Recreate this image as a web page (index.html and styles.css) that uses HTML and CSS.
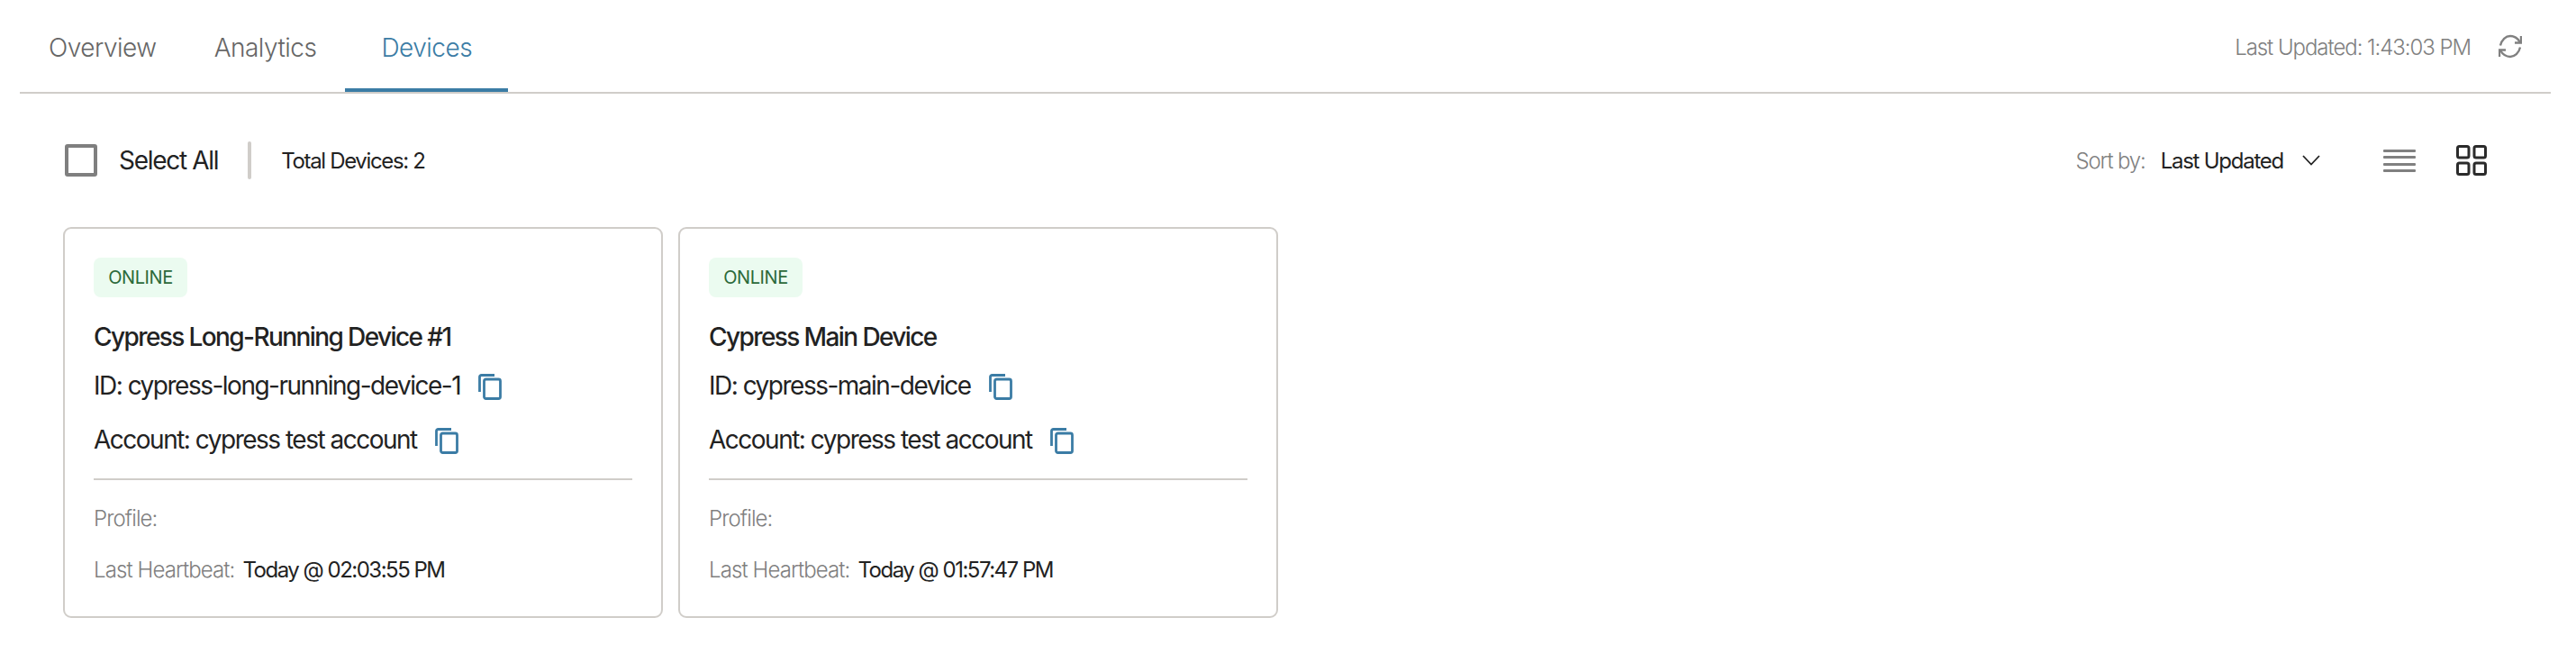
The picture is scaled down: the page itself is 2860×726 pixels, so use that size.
FILE: index.html
```html
<!DOCTYPE html>
<html lang="en">
<head>
<meta charset="utf-8">
<title>Devices</title>
<link rel="stylesheet" href="styles.css">
</head>
<body>
<div class="page">
  <header class="tabbar">
    <nav class="tabs">
      <a class="tab">Overview</a>
      <a class="tab">Analytics</a>
      <a class="tab active">Devices</a>
    </nav>
    <div class="updated">
      <span>Last Updated: 1:43:03 PM</span>
      <svg class="refresh" viewBox="0 0 26 27" fill="none" stroke="#808080" stroke-width="2.400">
        <path d="M2 12.500C3.500 6 8 2 13 2c4.600 0 8.400 2.600 11 7"/>
        <path d="M25 2v7.500h-7"/>
        <path d="M24 14.500C22.500 21 18 25 13 25c-4.600 0-8.400-2.600-11-7"/>
        <path d="M1 25v-7.500h7"/>
      </svg>
    </div>
  </header>

  <section class="toolbar">
    <div class="selection">
      <span class="checkbox"></span>
      <span class="select-all">Select All</span>
      <span class="vrule"></span>
      <span class="total">Total Devices: 2</span>
    </div>
    <div class="controls">
      <span class="muted">Sort by:</span>
      <span class="sort-value">Last Updated</span>
      <svg class="chevron" viewBox="0 0 20 12" fill="none" stroke="#222" stroke-width="1.800"><path d="M1 1l9 9.500L19 1"/></svg>
      <svg class="list-icon" viewBox="0 0 36 25" fill="#808080"><rect width="36" height="3" rx="1"/><rect y="7" width="36" height="3" rx="1"/><rect y="15" width="36" height="3" rx="1"/><rect y="22" width="36" height="3" rx="1"/></svg>
      <svg class="grid-icon" viewBox="0 0 34 34" fill="none" stroke="#2b2b2b" stroke-width="3">
        <rect x="1.500" y="1.500" width="12.500" height="12.500" rx="2"/>
        <rect x="20" y="1.500" width="12.500" height="12.500" rx="2"/>
        <rect x="1.500" y="20" width="12.500" height="12.500" rx="2"/>
        <rect x="20" y="20" width="12.500" height="12.500" rx="2"/>
      </svg>
    </div>
  </section>

  <main class="cards">
    <article class="card">
      <span class="badge">ONLINE</span>
      <h2 class="title">Cypress Long-Running Device #1</h2>
      <div class="row">
        <span class="row-text">ID: cypress-long-running-device-1</span>
        <svg class="copy" viewBox="0 0 26 30" fill="none" stroke="#3b7ca5" stroke-width="2.800"><path d="M1.500 21V4.500a2 2 0 0 1 2-2H18"/><rect x="6.500" y="7" width="18" height="21.500" rx="2"/></svg>
      </div>
      <div class="row">
        <span class="row-text">Account: cypress test account</span>
        <svg class="copy" viewBox="0 0 26 30" fill="none" stroke="#3b7ca5" stroke-width="2.800"><path d="M1.500 21V4.500a2 2 0 0 1 2-2H18"/><rect x="6.500" y="7" width="18" height="21.500" rx="2"/></svg>
      </div>
      <hr class="rule">
      <div class="meta"><span class="muted">Profile:</span></div>
      <div class="meta"><span class="muted">Last Heartbeat:</span><span class="value">Today @ 02:03:55 PM</span></div>
    </article>

    <article class="card">
      <span class="badge">ONLINE</span>
      <h2 class="title">Cypress Main Device</h2>
      <div class="row">
        <span class="row-text">ID: cypress-main-device</span>
        <svg class="copy" viewBox="0 0 26 30" fill="none" stroke="#3b7ca5" stroke-width="2.800"><path d="M1.500 21V4.500a2 2 0 0 1 2-2H18"/><rect x="6.500" y="7" width="18" height="21.500" rx="2"/></svg>
      </div>
      <div class="row">
        <span class="row-text">Account: cypress test account</span>
        <svg class="copy" viewBox="0 0 26 30" fill="none" stroke="#3b7ca5" stroke-width="2.800"><path d="M1.500 21V4.500a2 2 0 0 1 2-2H18"/><rect x="6.500" y="7" width="18" height="21.500" rx="2"/></svg>
      </div>
      <hr class="rule">
      <div class="meta"><span class="muted">Profile:</span></div>
      <div class="meta"><span class="muted">Last Heartbeat:</span><span class="value">Today @ 01:57:47 PM</span></div>
    </article>
  </main>
</div>
</body>
</html>
```

FILE: styles.css
```css
* { box-sizing: border-box; }

html, body {
  margin: 0;
  background: #fff;
}

body {
  font-family: Inter, "Liberation Sans", sans-serif;
  color: #222;
}

.page {
  padding: 0 28px 0 22px;
}

.tabbar {
  display: flex;
  justify-content: space-between;
  height: 104px;
  border-bottom: 2px solid #d0cdc9;
}

.tabs {
  display: flex;
}

.tab {
  height: 102px;
  padding: 36px 32px 0;
  font-size: 28px;
  font-weight: 300;
  line-height: 34px;
  letter-spacing: -0.5px;
  color: #666;
}

.tab.active {
  padding: 36px 40px 0;
  color: #3b7ca5;
  border-bottom: 4px solid #3b7ca5;
}

.updated {
  display: flex;
  align-items: center;
  gap: 31px;
  height: 102px;
  padding: 2px 32px 0 0;
  font-size: 24px;
  font-weight: 300;
  letter-spacing: -1.05px;
  color: #808080;
}

.refresh {
  width: 26px;
  height: 27px;
  margin-top: -2px;
}

.toolbar {
  display: flex;
  justify-content: space-between;
  align-items: center;
  height: 42px;
  margin: 53px 0;
  padding: 0 71px 0 50px;
}

.selection,
.controls {
  display: flex;
  align-items: center;
}

.checkbox {
  width: 36px;
  height: 36px;
  border: 4px solid #7f7f7f;
  border-radius: 3px;
}

.select-all {
  margin-left: 24px;
  font-size: 28px;
  letter-spacing: -1.3px;
}

.vrule {
  width: 4px;
  height: 42px;
  margin: 0 33px;
  border-radius: 2px;
  background: #d0cdc9;
}

.total {
  font-size: 24px;
  letter-spacing: -1.35px;
}

.muted {
  font-size: 24px;
  font-weight: 300;
  letter-spacing: -1.15px;
  color: #808080;
}

.sort-value {
  margin-left: 17px;
  font-size: 24px;
  letter-spacing: -1.25px;
}

.chevron {
  width: 20px;
  height: 12px;
  margin-left: 21px;
}

.list-icon {
  width: 36px;
  height: 25px;
  margin-left: 70px;
}

.grid-icon {
  width: 34px;
  height: 34px;
  margin-left: 45px;
}

.cards {
  display: flex;
  gap: 17px;
  padding-left: 48px;
}

.card {
  display: flex;
  flex-direction: column;
  align-items: flex-start;
  width: 666px;
  height: 434px;
  padding: 32px;
  border: 2px solid #d0cdc9;
  border-radius: 9px;
}

.badge {
  width: 104px;
  height: 44px;
  border-radius: 8px;
  background: #ebfbf0;
  color: #2c6a3a;
  font-size: 20px;
  line-height: 44px;
  letter-spacing: -0.4px;
  text-align: center;
}

.title {
  margin: 24px 0 0;
  font-size: 28px;
  font-weight: 500;
  line-height: 40px;
  letter-spacing: -1.6px;
}

.row {
  display: flex;
  align-items: center;
  gap: 20px;
  height: 30px;
  margin-top: 20px;
  font-size: 28px;
  letter-spacing: -1.5px;
}

.row-text {
  margin-top: -3px;
}

.row + .row {
  margin-top: 30px;
}

.copy {
  width: 26px;
  height: 30px;
}

.rule {
  align-self: stretch;
  height: 2px;
  margin: 27px 0 0;
  border: 0;
  background: #d0cdc9;
}

.meta {
  display: flex;
  gap: 9px;
  margin-top: 27px;
  font-size: 24px;
  line-height: 30px;
}

.meta .muted {
  letter-spacing: -0.9px;
}

.rule + .meta {
  margin-top: 28px;
}

.value {
  letter-spacing: -1.5px;
}
```
